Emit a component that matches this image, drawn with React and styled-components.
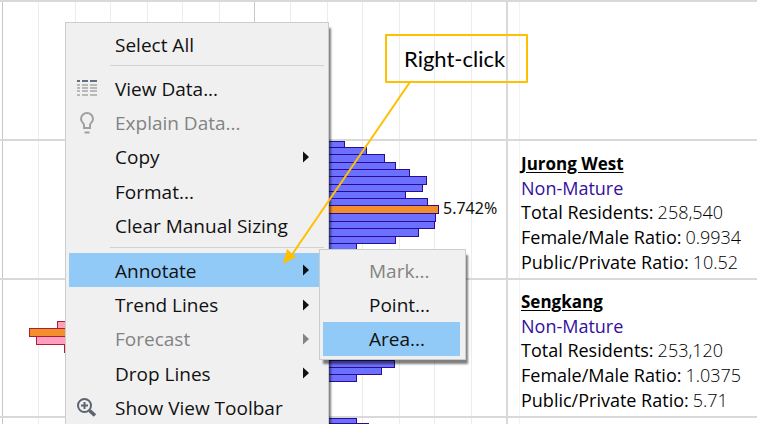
import React from "react";
import styled, { createGlobalStyle } from "styled-components";

const Global = createGlobalStyle`
  * { box-sizing: border-box; }
  body { margin: 0; background: #fff; overflow: hidden; }
  button { font: inherit; }
`;

const uiFont = '"Open Sans", "Noto Sans", sans-serif';

const Page = styled.main`
  position: relative;
  overflow: hidden;
  font-family: ${uiFont};
  color: #000;
`;

const Sheet = styled.div`
  display: grid;
  grid-template-rows: 139px 139px 138px 8px;
`;

const Row = styled.section`
  display: grid;
  grid-template-columns: 508px 1fr;
  min-height: 0;
  overflow: hidden;
`;

const ChartCell = styled.div`
  border-top: 2px solid #d9d9d9;
  border-right: 2px solid #d9d9d9;
  overflow: hidden;
`;

const Plot = styled.svg`
  display: block;
`;

const NotesCell = styled.div`
  display: grid;
  align-content: center;
  border-top: 2px solid #d9d9d9;
  padding-left: 13px;
  padding-top: 7px;
  background: linear-gradient(#f3f3f3, #f3f3f3) 11px 0 / 1px 100% no-repeat;
`;

const Town = styled.h2`
  margin: 0;
  font-size: 17px;
  line-height: 24px;
  font-weight: 700;
  text-decoration: underline;
  text-underline-offset: 2px;
`;

const Maturity = styled.p`
  margin: 0;
  font-size: 18px;
  line-height: 24px;
  color: #33109c;
`;

const Facts = styled.dl`
  margin: 0;
  font-size: 18px;
  line-height: 25px;
`;

const Fact = styled.div`
  display: flex;
  gap: 4px;
  white-space: nowrap;
`;

const Term = styled.dt``;

const Value = styled.dd`
  margin: 0;
  font-weight: 300;
`;

const MenuPanel = styled.div`
  position: absolute;
  left: ${(p) => p.$left}px;
  top: ${(p) => p.$top}px;
  width: ${(p) => p.$width}px;
  padding: ${(p) => p.$pad};
  background: #f0f0f0;
  border: 1px solid #ccc;
  box-shadow: 3px 5px 2px -1px rgba(0, 0, 0, 0.5);
  font-size: 19px;
`;

const Group = styled.div`
  display: grid;
  grid-auto-rows: 1fr;
  min-height: ${(p) => p.$height}px;
`;

const Divider = styled.hr`
  margin: 4px 0 5px 41px;
  border: 0;
  height: 1px;
  background: #d2d2d2;
`;

const Item = styled.button`
  display: grid;
  grid-template-columns: 46px 1fr 21px;
  align-items: center;
  padding: 0;
  border: 0;
  background: ${(p) => (p.$active ? "#91c9f7" : "transparent")};
  color: ${(p) => (p.disabled ? "#838383" : "#111")};
  text-align: left;
  line-height: 24px;
  white-space: nowrap;
`;

const IconSlot = styled.span`
  display: flex;
  padding-left: 7px;
`;

const Label = styled.span`
  padding-top: 1px;
`;

const Callout = styled.div`
  position: absolute;
  left: 385px;
  top: 34px;
  padding: 10px 21px 9px 17px;
  border: 2px solid #ffc000;
  border-radius: 1px;
  font-family: Lato, "Open Sans", sans-serif;
  font-size: 22px;
  line-height: 26px;
`;

const Pointer = styled.svg`
  position: absolute;
  left: 280px;
  top: 82px;
  pointer-events: none;
`;

const gridX = [38, 75, 110, 147, 182, 219, 290, 327, 362, 399, 434, 471];

const bars = {
  top: [],
  jurong: [
    [0, 6, 345], [6, 8, 367], [13, 8, 385], [21, 8, 396], [28, 8, 410],
    [35, 8, 427], [43, 7, 423], [50, 7, 406], [57, 8, 428],
    [72, 8, 436], [80, 7, 435], [87, 8, 419], [95, 7, 396], [102, 8, 357],
    [64, 8, 439, "#f28e2b"],
  ],
  sengkang: [[80, 7, 395], [87, 7, 382], [94, 7, 357]],
  next: [[0, 5, 357], [5, 8, 369]],
};

const leftBars = [
  [41, 8, 57, "#ff9fbf"],
  [56, 8, 36, "#ff9fbf"],
  [64, 8, 64, "#ff9fbf"],
  [48, 8, 29, "#f28e2b"],
];

function Chart({ data, left = [], highlight }) {
  return (
    <Plot width="506" height="137" aria-hidden="true" shapeRendering="crispEdges">
      {gridX.map((x) => (
        <rect key={x} x={x} width="1" height="137" fill="#ececec" />
      ))}
      <rect x="2" width="1" height="137" fill="#c8c8c8" />
      <rect x="254" width="1" height="137" fill="#c8c8c8" />
      {left.map(([y, h, x, fill]) => (
        <rect key={y} x={x + 0.5} y={y + 0.5} width={255 - x} height={h} fill={fill} stroke="#b01e32" />
      ))}
      {data.map(([y, h, x, fill = "#6c70ff"]) => (
        <rect key={y} x="255.5" y={y + 0.5} width={x - 256} height={h} fill={fill} stroke="#2e0a8f" />
      ))}
      {highlight && (
        <text x="443" y="73" fontFamily="Noto Sans, sans-serif" fontSize="16" fill="#111">
          {highlight}
        </text>
      )}
    </Plot>
  );
}

function Notes({ town, residents, gender, housing }) {
  return (
    <NotesCell>
      <Town>{town}</Town>
      <Maturity>Non-Mature</Maturity>
      <Facts>
        <Fact><Term>Total Residents:</Term><Value>{residents}</Value></Fact>
        <Fact><Term>Female/Male Ratio:</Term><Value>{gender}</Value></Fact>
        <Fact><Term>Public/Private Ratio:</Term><Value>{housing}</Value></Fact>
      </Facts>
    </NotesCell>
  );
}

const TableIcon = () => (
  <svg width="22" height="18" viewBox="0 0 22 18" shapeRendering="crispEdges">
    {[1, 5, 8, 11, 15].map((y, i) =>
      [[1, 3], [6, 6], [14, 7]].map(([x, w]) => (
        <rect key={`${x}-${y}`} x={x} y={y} width={w} height="2" fill={i ? "#b9b9b9" : "#5f6f84"} />
      ))
    )}
  </svg>
);

const BulbIcon = () => (
  <svg width="22" height="22" viewBox="0 0 22 22" fill="none" stroke="#a0a0a0" strokeWidth="2">
    <path d="M8 16v-3c0-2-3-2.500-3-6a6 6 0 0 1 12 0c0 3.500-3 4-3 6v3z" />
    <path d="M8.500 20.500h5" />
  </svg>
);

const ZoomIcon = () => (
  <svg width="22" height="22" viewBox="0 0 22 22" fill="none" stroke="#5b6470">
    <circle cx="8.500" cy="8.500" r="6.500" strokeWidth="2" />
    <path d="M8.500 5v7M5 8.500h7" strokeWidth="2" />
    <path d="M13.500 13.500l5.500 5" strokeWidth="3.600" />
  </svg>
);

const Arrow = () => (
  <svg width="6" height="12" viewBox="0 0 6 12" fill="currentColor" aria-hidden="true">
    <path d="M0 0.500L6 6L0 11.500z" />
  </svg>
);

function MenuItem({ label, icon, submenu, ...rest }) {
  return (
    <Item type="button" role="menuitem" {...rest}>
      <IconSlot>{icon}</IconSlot>
      <Label>{label}</Label>
      {submenu && <Arrow />}
    </Item>
  );
}

export default function App() {
  return (
    <Page>
      <Global />
      <Sheet>
        <Row>
          <ChartCell><Chart data={bars.top} /></ChartCell>
          <NotesCell />
        </Row>
        <Row>
          <ChartCell><Chart data={bars.jurong} highlight="5.742%" /></ChartCell>
          <Notes town="Jurong West" residents="258,540" gender="0.9934" housing="10.52" />
        </Row>
        <Row>
          <ChartCell><Chart data={bars.sengkang} left={leftBars} /></ChartCell>
          <Notes town="Sengkang" residents="253,120" gender="1.0375" housing="5.71" />
        </Row>
        <Row>
          <ChartCell><Chart data={bars.next} /></ChartCell>
          <NotesCell />
        </Row>
      </Sheet>

      <MenuPanel role="menu" aria-label="Chart" $left={65} $top={22} $width={264} $pad="4px 4px 0 3px">
        <Group $height={34}>
          <MenuItem label="Select All" />
        </Group>
        <Divider />
        <Group $height={172}>
          <MenuItem label="View Data..." icon={<TableIcon />} />
          <MenuItem label="Explain Data..." icon={<BulbIcon />} disabled />
          <MenuItem label="Copy" submenu />
          <MenuItem label="Format..." />
          <MenuItem label="Clear Manual Sizing" />
        </Group>
        <Divider />
        <Group $height={172}>
          <MenuItem label="Annotate" submenu $active />
          <MenuItem label="Trend Lines" submenu />
          <MenuItem label="Forecast" submenu disabled />
          <MenuItem label="Drop Lines" submenu />
          <MenuItem label="Show View Toolbar" icon={<ZoomIcon />} />
        </Group>
      </MenuPanel>

      <MenuPanel role="menu" aria-label="Annotate" $left={319} $top={249} $width={147} $pad="3px 5px 3px 3px">
        <Group $height={103}>
          <MenuItem label="Mark..." disabled />
          <MenuItem label="Point..." />
          <MenuItem label="Area..." $active />
        </Group>
      </MenuPanel>

      <Callout>Right-click</Callout>
      <Pointer width="134" height="184" aria-hidden="true">
        <path d="M130 0L11 174" stroke="#ffc000" strokeWidth="2" />
        <path d="M3 182L7 167L16 175z" fill="#ffc000" />
      </Pointer>
    </Page>
  );
}
